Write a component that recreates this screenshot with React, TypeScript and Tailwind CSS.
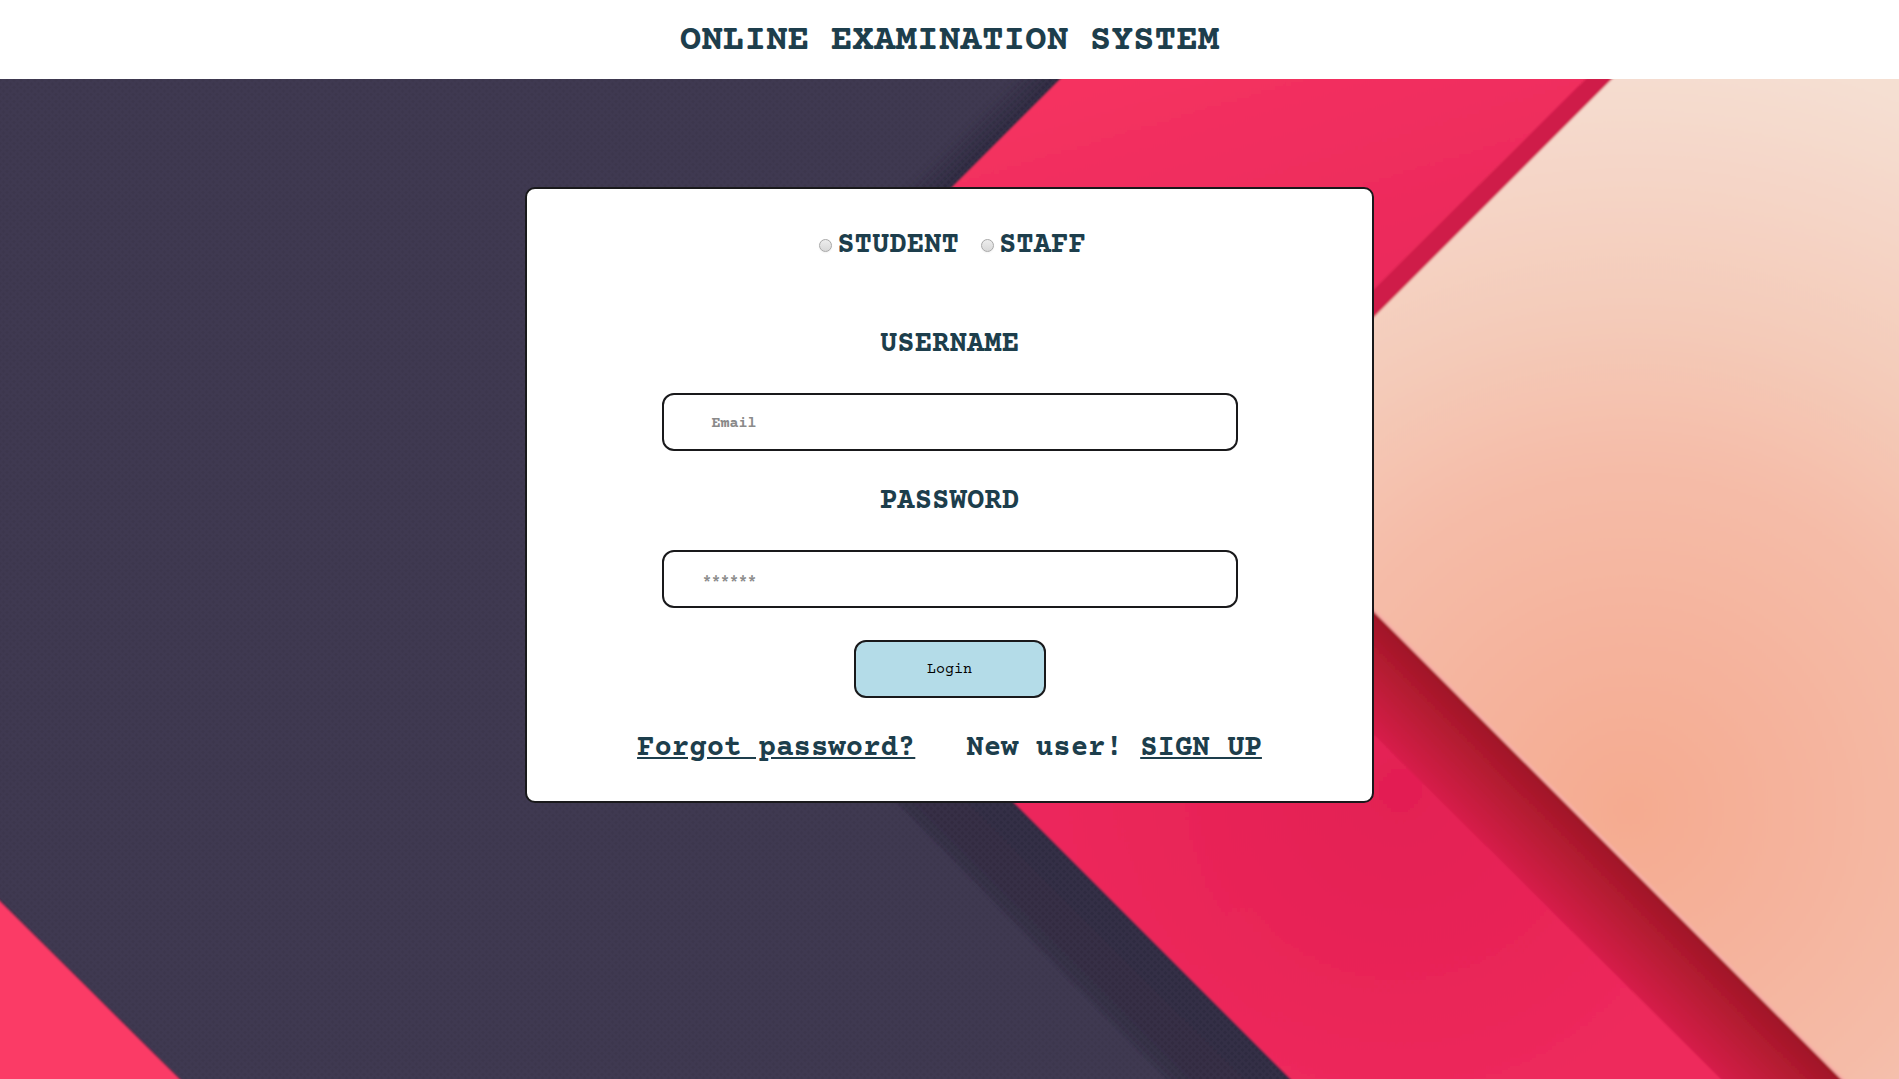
import React from "react";

function Backdrop() {
  return (
    <svg
      aria-hidden="true"
      className="absolute inset-0 h-full w-full"
      viewBox="0 79 1899 1000"
      preserveAspectRatio="xMidYMid slice"
    >
      <defs>
        <pattern id="weave" width="7" height="7" patternUnits="userSpaceOnUse">
          <path d="M0 0 7 7M7 0 0 7" stroke="#4a4560" strokeWidth="2" opacity="0.18" />
        </pattern>
        <linearGradient id="pink" gradientUnits="userSpaceOnUse" x1="1000" y1="79" x2="1300" y2="1079">
          <stop offset="0" stopColor="#f63261" />
          <stop offset="0.3" stopColor="#ea2a5b" />
          <stop offset="0.72" stopColor="#ec285b" />
          <stop offset="1" stopColor="#ee2a5c" />
        </linearGradient>
        <radialGradient id="pinkDeep" gradientUnits="userSpaceOnUse" cx="1400" cy="790" r="340">
          <stop offset="0" stopColor="#e01d51" stopOpacity="0.8" />
          <stop offset="1" stopColor="#e01d51" stopOpacity="0" />
        </radialGradient>
        <radialGradient id="cream" gradientUnits="userSpaceOnUse" cx="1630" cy="810" r="760">
          <stop offset="0" stopColor="#f5ab90" />
          <stop offset="0.2" stopColor="#f5b29b" />
          <stop offset="0.45" stopColor="#f5bca8" />
          <stop offset="0.65" stopColor="#f4cbb9" />
          <stop offset="0.85" stopColor="#f5d6c8" />
          <stop offset="1" stopColor="#f5dfd2" />
        </radialGradient>
        <linearGradient id="fold" gradientUnits="userSpaceOnUse" x1="1600" y1="837" x2="1539" y2="898">
          <stop offset="0" stopColor="#9f1827" />
          <stop offset="0.35" stopColor="#b21a30" />
          <stop offset="1" stopColor="#d61b49" />
        </linearGradient>
        <linearGradient id="shade" gradientUnits="userSpaceOnUse" x1="1152" y1="941" x2="1080" y2="1013">
          <stop offset="0" stopColor="#2e293f" />
          <stop offset="0.75" stopColor="#322d42" />
          <stop offset="1" stopColor="#3c364d" />
        </linearGradient>
        <linearGradient id="shadeTop" gradientUnits="userSpaceOnUse" x1="1020" y1="119" x2="995" y2="94">
          <stop offset="0" stopColor="#2b273c" />
          <stop offset="1" stopColor="#2b273c" stopOpacity="0" />
        </linearGradient>
        <filter id="soft" x="-5%" y="-5%" width="110%" height="110%">
          <feGaussianBlur stdDeviation="1" />
        </filter>
      </defs>
      <rect y="79" width="1899" height="1000" fill="#3c364d" />
      <g filter="url(#soft)">
        <path d="M1080 59 675 464 600 464 1005 59Z" fill="url(#shadeTop)" />
        <path d="M675 464 1310 1099H1185L587 484Z" fill="url(#shade)" />
      </g>
      <rect y="79" width="1899" height="1000" fill="url(#weave)" />
      <g filter="url(#soft)">
        <path d="M-20 881V1099H200Z" fill="#fb3a66" stroke="#5d2040" strokeWidth="1" />
        <path d="M1080 59 675 464 1310 1099H1920V59Z" fill="url(#pink)" stroke="#6b2040" strokeWidth="1" />
        <path d="M1080 59 675 464 1310 1099H1920V59Z" fill="url(#pinkDeep)" />
        <path d="M1606 59 1200 462 1240 480 1640 59Z" fill="#cf1b48" />
        <path d="M1227 464 1863 1099H1741L1200 562Z" fill="url(#fold)" />
        <path d="M1632 59 1227 464 1863 1099H1940V59Z" fill="url(#cream)" />
        <path d="M1228 464 1863 1099" stroke="#f9b0a8" strokeWidth="3" />
      </g>
    </svg>
  );
}

function Role({ label }: { label: string }) {
  return (
    <label className="flex items-center gap-[5px]">
      <input
        type="radio"
        name="role"
        className="size-[13px] appearance-none rounded-full border border-[#a8a8a8] bg-linear-to-b from-[#ededed] to-[#d8d8d8] shadow-xs checked:bg-[#1d3e4c]"
      />
      {label}
    </label>
  );
}

const field =
  "mt-8 h-[58px] w-full max-w-xl rounded-xl border-2 border-[#19191b] bg-white pt-[3px] pr-4 pl-[39px] text-[15px] text-black placeholder:text-[#8a8a8a]";

export default function App() {
  return (
    <div className="flex min-h-screen flex-col font-['Courier_Prime','Courier_New','Liberation_Mono',monospace] font-bold text-[#1d3e4c]">
      <header className="bg-white pt-[21px] pb-[17px] text-center">
        <h1 className="text-[36px] leading-[41px]">ONLINE EXAMINATION SYSTEM</h1>
      </header>
      <main className="relative flex grow flex-col items-center px-4 pt-[108px] pb-16">
        <Backdrop />
        <form
          onSubmit={(e) => e.preventDefault()}
          className="relative flex w-full max-w-[849px] flex-col items-center rounded-[10px] border-2 border-[#19191b] bg-white px-4 pt-10 pb-9 text-[29px] leading-[33px]"
        >
          <div className="flex gap-[22px] pl-[6px]">
            <Role label="STUDENT" />
            <Role label="STAFF" />
          </div>
          <label htmlFor="email" className="mt-[66px]">USERNAME</label>
          <input id="email" type="email" placeholder=" Email" className={field} />
          <label htmlFor="password" className="mt-[34px]">PASSWORD</label>
          <input id="password" type="password" placeholder="******" className={field} />
          <button
            type="submit"
            className="mt-8 h-[58px] w-48 rounded-xl border-2 border-[#19191b] bg-[#b4dce8] text-[15px] font-normal text-black"
          >
            Login
          </button>
          <div className="mt-[34px] flex flex-wrap justify-center gap-x-[51px]">
            <a href="#forgot" className="underline">Forgot password?</a>
            <p>
              New user! <a href="#signup" className="underline">SIGN UP</a>
            </p>
          </div>
        </form>
      </main>
    </div>
  );
}
